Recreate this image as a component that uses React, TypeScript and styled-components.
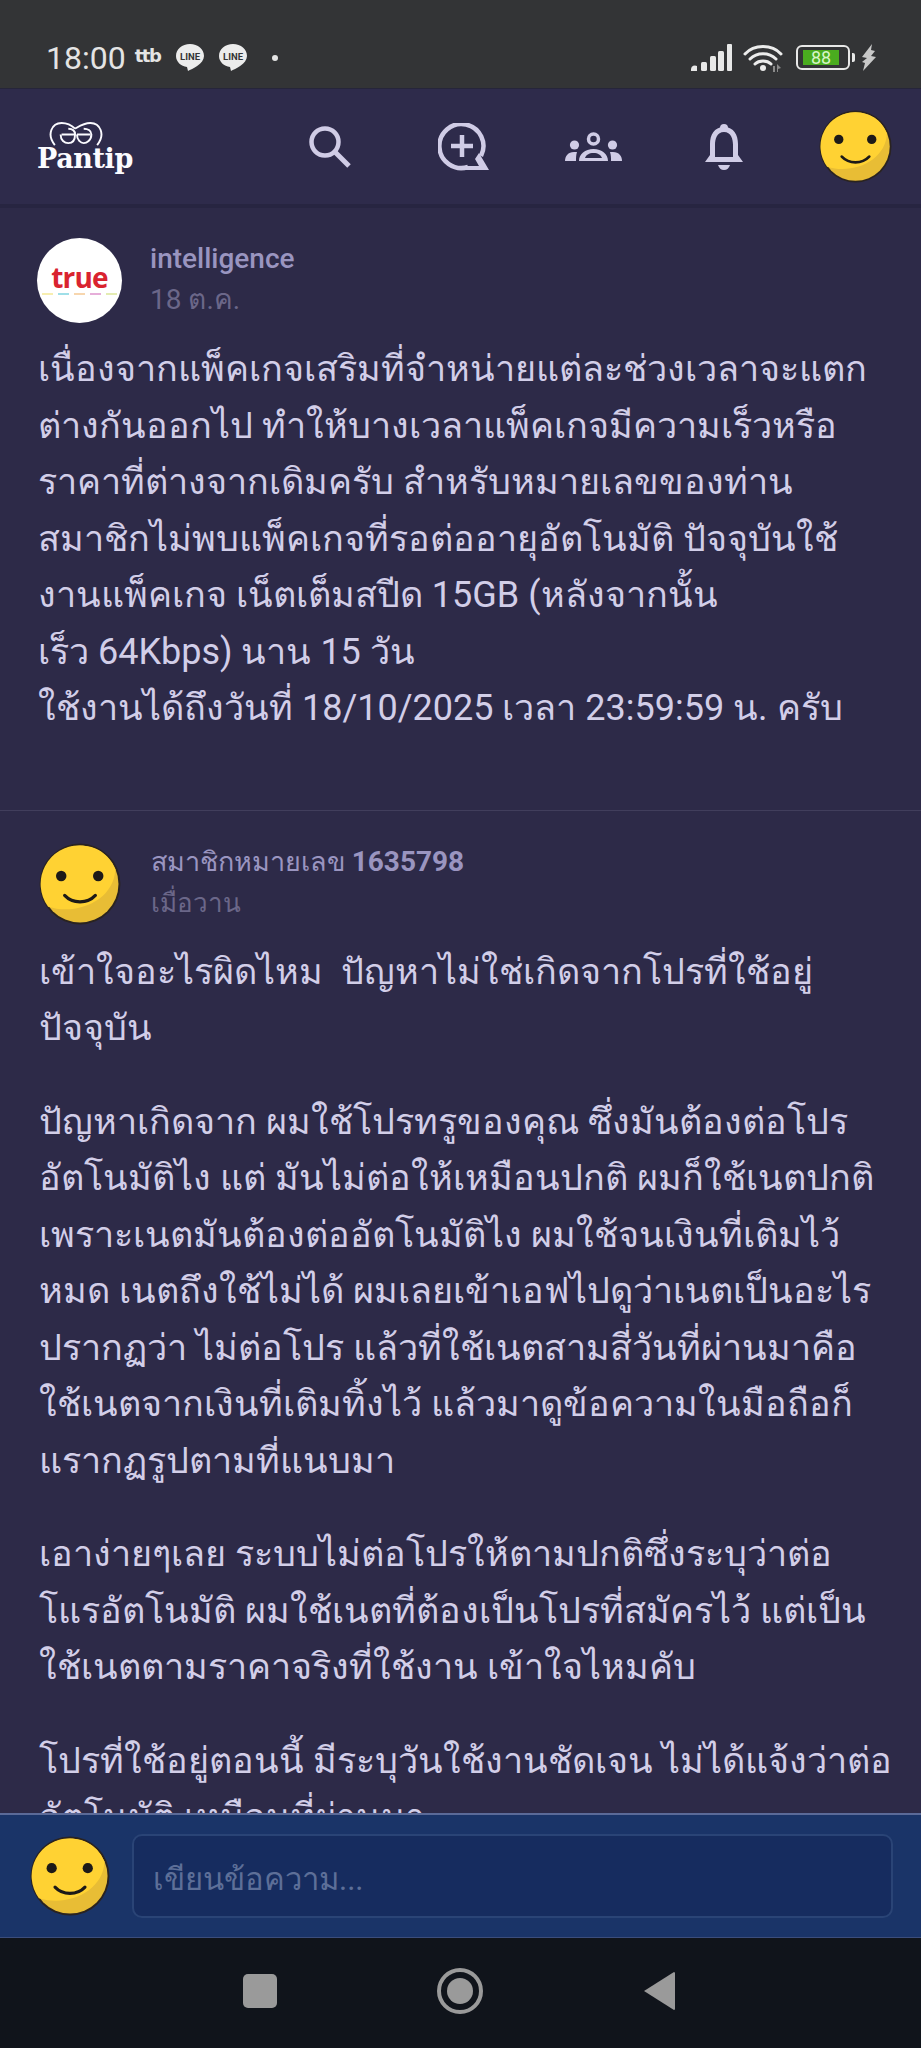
import styled, { createGlobalStyle } from 'styled-components';

const GlobalStyle = createGlobalStyle`
  html, body {
    margin: 0;
    padding: 0;
    background: #2d2a48;
  }
`;

const Screen = styled.div`
  width: 921px;
  height: 2048px;
  display: flex;
  flex-direction: column;
  overflow: hidden;
  font-family: Roboto, 'Noto Sans', sans-serif;
  background: #2d2a48;
`;

const StatusBar = styled.div`
  height: 88px;
  flex: none;
  box-sizing: border-box;
  display: flex;
  align-items: center;
  padding: 27px 44px 0 46px;
  background: #333436;
  color: #e4e4e4;
`;

const Clock = styled.span`
  font-size: 32px;
  line-height: 36px;
  margin-right: 9px;
`;

const CarrierMark = styled.span`
  font-family: 'DejaVu Sans', sans-serif;
  font-weight: 700;
  font-size: 18px;
  letter-spacing: -1.5px;
  line-height: 24px;
  margin-right: 15px;
  margin-top: -3px;
`;

const StatusIcons = styled.div`
  margin-left: auto;
  display: flex;
  align-items: center;
`;

const Icon = styled.svg<{ $after?: number; $before?: number }>`
  display: block;
  flex: none;
  margin-right: ${({ $after = 0 }) => $after}px;
  margin-left: ${({ $before = 0 }) => $before}px;
`;

const BatteryBox = styled.div`
  width: 54px;
  height: 25px;
  box-sizing: border-box;
  border: 2px solid #e8e8e8;
  border-radius: 6px;
  padding: 3px 9px 3px 5px;
  margin: 0 2px 0 13px;
`;

const BatteryFill = styled.div`
  height: 100%;
  background: #4aac1f;
  color: #d8f5c8;
  font-size: 18px;
  line-height: 15px;
  text-align: center;
`;

const BatteryCap = styled.div`
  width: 3px;
  height: 9px;
  background: #e8e8e8;
  border-radius: 0 2px 2px 0;
  margin-right: 6px;
`;

const Header = styled.header`
  height: 116px;
  flex: none;
  box-sizing: border-box;
  display: flex;
  align-items: center;
  padding: 0 29px 0 37px;
  background: #2e2b4b;
  border-top: 1px solid #26253a;
`;

const Logo = styled.div`
  width: 96px;
  display: flex;
  flex-direction: column;
  align-items: center;
  margin-right: 176px;
`;

const LogoWord = styled.span`
  font-family: 'DejaVu Serif', serif;
  font-weight: 700;
  font-size: 27px;
  line-height: 26px;
  letter-spacing: -0.4px;
  color: #fbfbff;
`;

const HeaderIcons = styled.nav`
  flex: 1;
  display: flex;
  align-items: center;
`;

const HeaderShadow = styled.div`
  height: 4px;
  flex: none;
  background: #272541;
`;

const Feed = styled.main`
  flex: 1;
  min-height: 0;
  overflow: hidden;
`;

const Post = styled.article<{ $divided?: boolean }>`
  box-sizing: border-box;
  padding: ${({ $divided }) => ($divided ? '30px 30px 0 39px' : '30px 30px 36px 37px')};
  border-top: ${({ $divided }) => ($divided ? '1px solid #413e5c' : 'none')};
`;

const Author = styled.div<{ $gap: number }>`
  display: flex;
  align-items: center;
  column-gap: ${({ $gap }) => $gap}px;
`;

const TrueBadge = styled.div`
  width: 85px;
  height: 85px;
  border-radius: 50%;
  background: #fff;
  display: flex;
  flex-direction: column;
  align-items: center;
  justify-content: center;
`;

const TrueWord = styled.span`
  font-family: 'Open Sans', sans-serif;
  font-weight: 700;
  font-size: 28px;
  line-height: 26px;
  letter-spacing: -0.8px;
  color: #d9232f;
  margin-top: -2px;
`;

const TrueStripes = styled.div`
  display: flex;
  gap: 5px;
  margin-top: 3px;
`;

const Stripe = styled.span<{ $color: string }>`
  width: 11px;
  height: 2px;
  background: ${({ $color }) => $color};
`;

const AuthorText = styled.div`
  display: flex;
  flex-direction: column;
  padding-bottom: 3px;
`;

const Name = styled.div<{ $size?: number }>`
  font-size: ${({ $size = 28 }) => $size}px;
  line-height: 41px;
  font-weight: 500;
  color: #9a95c0;
`;

const Digits = styled.span`
  font-size: 28px;
  font-weight: 700;
`;

const When = styled.div<{ $size?: number }>`
  font-size: ${({ $size = 28 }) => $size}px;
  line-height: 41px;
  color: #6b6789;
`;

const Body = styled.div<{ $indent: number; $top: number }>`
  margin: ${({ $top }) => $top}px 0 0 ${({ $indent }) => $indent}px;
`;

const Para = styled.p`
  margin: 0 0 37px;
  font-size: 36px;
  line-height: 56.5px;
  color: #d2cee8;
  white-space: nowrap;
`;

const Composer = styled.div`
  height: 125px;
  flex: none;
  box-sizing: border-box;
  display: flex;
  align-items: center;
  column-gap: 22px;
  padding: 0 28px 0 30px;
  background: #1a3468;
  border-top: 2px solid #5b6a98;
  border-bottom: 1px solid #3b4d7c;
`;

const Input = styled.div`
  flex: 1;
  height: 84px;
  box-sizing: border-box;
  display: flex;
  align-items: center;
  padding: 5px 19px 0;
  background: #162c5f;
  border: 2px solid #2a4476;
  border-radius: 10px;
  font-size: 31px;
  color: #5d6f98;
`;

const NavBar = styled.div`
  height: 110px;
  flex: none;
  display: flex;
  align-items: center;
  justify-content: center;
  column-gap: 160px;
  background: #10141b;
  padding: 0 4px 4px 0;
  box-sizing: border-box;
`;

const Smiley = ({ size }: { size: number }) => (
  <Icon width={size} height={size} viewBox="0 0 72 72">
    <circle cx="36" cy="36" r="35.500" fill="#2a2320" />
    <circle cx="36" cy="36" r="33.800" fill="#e8bd35" />
    <path d="M36 2.2A33.800 33.800 0 0 0 8 56c26 8 58-6 59-33C62 10 50 2.200 36 2.200Z" fill="#ffd233" />
    <circle cx="19.500" cy="29" r="4.600" fill="#1d1a18" />
    <circle cx="52" cy="29" r="4.600" fill="#1d1a18" />
    <path d="M22.500 46c7 7.500 20 7.500 27 0" fill="none" stroke="#1d1a18" strokeWidth="2.800" strokeLinecap="round" />
  </Icon>
);

const LineBubble = () => (
  <Icon width="30" height="29" viewBox="0 0 30 29" $after={13}>
    <path d="M15 1C7 1 1 6 1 13c0 6 5 10 11 11l1 4c4-2 16-7 16-15C29 6 23 1 15 1Z" fill="#ececec" />
    <text x="15" y="17" fontFamily="Roboto" fontWeight="700" fontSize="9.500" textAnchor="middle" fill="#333436">
      LINE
    </text>
  </Icon>
);

const TRUE_STRIPES = ['#f7eeb0', '#9fdfe8', '#f7d6ae', '#e6aed9', '#e4ecb2'];

const App = () => (
  <>
    <GlobalStyle />
    <Screen>
      <StatusBar>
        <Clock>18:00</Clock>
        <CarrierMark>ttb</CarrierMark>
        <LineBubble />
        <LineBubble />
        <Icon width="8" height="8" viewBox="0 0 8 8" $before={10}>
          <circle cx="4" cy="4" r="3" fill="#e4e4e4" />
        </Icon>
        <StatusIcons>
          <Icon width="41" height="27" viewBox="0 0 41 27" $after={11}>
            <path d="M0 27v-2a4 4 0 0 1 6-3v5Z" fill="#e8e8e8" />
            <rect x="10" y="18" width="6" height="9" rx="1.500" fill="#e8e8e8" />
            <rect x="19" y="12" width="6" height="15" rx="1.500" fill="#e8e8e8" />
            <rect x="27" y="7" width="6" height="20" rx="1.500" fill="#e8e8e8" />
            <rect x="36" y="0" width="5" height="27" rx="1" fill="#e8e8e8" />
          </Icon>
          <Icon width="40" height="30" viewBox="0 0 40 30">
            <g fill="none" stroke="#ececec" strokeWidth="3" strokeLinecap="round">
              <path d="M2 11C11 1 29 1 38 11" />
              <path d="M7 16C14 9 26 9 33 16" />
              <path d="M12 21c4-4 12-4 16 0" />
            </g>
            <circle cx="20" cy="25" r="3" fill="#ececec" />
            <path d="M30 29v-6h2v6Zm4 0v-8l4 4-3 1v3Z" fill="#8a8a8a" />
          </Icon>
          <BatteryBox>
            <BatteryFill>88</BatteryFill>
          </BatteryBox>
          <BatteryCap />
          <Icon width="16" height="27" viewBox="0 0 16 27">
            <path d="M11 0 1 13l5 1-5 4 3 1-2 8 13-14-5-1 4-5-4-1Z" fill="#c8c8c8" />
          </Icon>
        </StatusIcons>
      </StatusBar>

      <Header>
        <Logo>
          <Icon width="56" height="25" viewBox="0 0 58 26" $after={18}>
            <g fill="none" stroke="#fbfbff" strokeWidth="2">
              <path d="M7 25C-2 14 4 2 14 2c7 0 11 3 14 6" />
              <path d="M51 25C60 14 54 2 44 2c-7 0-11 3-16 6" />
              <path d="M14 14h14M30 14h14" />
              <path d="M13 14c0 6 4 9 8 9s7-3 7-9c0-4-3-6-7-6" />
              <path d="M30 14c0 6 4 9 7 9s8-3 8-9c0-4-4-6-8-6" />
            </g>
          </Icon>
          <LogoWord>Pantip</LogoWord>
        </Logo>
        <HeaderIcons>
          <Icon width="42" height="42" viewBox="0 0 42 42" $after={87}>
            <circle cx="16" cy="16" r="13.500" fill="none" stroke="#d0cce6" strokeWidth="4.500" />
            <path d="M26 26l14 14" stroke="#d0cce6" strokeWidth="5" />
          </Icon>
          <Icon width="52" height="48" viewBox="0 0 52 48" $after={75}>
            <path d="M30 44A22 22 0 1 1 43 33" fill="none" stroke="#d0cce6" strokeWidth="4.500" />
            <path d="M24 12v22M13 23h22" fill="none" stroke="#d0cce6" strokeWidth="4.500" />
            <path d="M41 30l10 17H26v-4h15l-4-7Z" fill="#d0cce6" />
          </Icon>
          <Icon width="57" height="30" viewBox="0 0 57 30" $after={83}>
            <g fill="#d0cce6">
              <circle cx="9.500" cy="13" r="4.600" />
              <circle cx="47.500" cy="13" r="4.600" />
              <path d="M0 29c0-5 3-9 9-9h3c-1 3-1 6-1 9ZM57 29c0-5-3-9-9-9h-3c1 3 1 6 1 9Z" />
              <path d="M14 29c0-7 6-12 14.500-12S43 22 43 29ZM20 26h17c-1-3-4-5-8.500-5S21 23 20 26Z" fillRule="evenodd" />
            </g>
            <circle cx="28.500" cy="7" r="5" fill="none" stroke="#d0cce6" strokeWidth="3.500" />
          </Icon>
          <Icon width="38" height="46" viewBox="0 0 38 46" $after={76}>
            <g fill="#d0cce6">
              <circle cx="19" cy="4" r="4" />
              <path d="M19 3C9 3 5 11 5 20v11l-5 7h38l-5-7V20c0-9-4-17-14-17Zm0 5c7 0 9 7 9 13v12H10V21c0-6 2-13 9-13Z" fillRule="evenodd" />
              <path d="M13 41h12c-1 3-3 5-6 5s-5-2-6-5Z" />
            </g>
          </Icon>
          <Smiley size={73} />
        </HeaderIcons>
      </Header>
      <HeaderShadow />

      <Feed>
        <Post>
          <Author $gap={28}>
            <TrueBadge>
              <TrueWord>true</TrueWord>
              <TrueStripes>
                {TRUE_STRIPES.map((color) => (
                  <Stripe key={color} $color={color} />
                ))}
              </TrueStripes>
            </TrueBadge>
            <AuthorText>
              <Name>intelligence</Name>
              <When>18 ต.ค.</When>
            </AuthorText>
          </Author>
          <Body $indent={1} $top={18}>
            <Para>
              เนื่องจากแพ็คเกจเสริมที่จำหน่ายแต่ละช่วงเวลาจะแตก
              <br />
              ต่างกันออกไป ทำให้บางเวลาแพ็คเกจมีความเร็วหรือ
              <br />
              ราคาที่ต่างจากเดิมครับ สำหรับหมายเลขของท่าน
              <br />
              สมาชิกไม่พบแพ็คเกจที่รอต่ออายุอัตโนมัติ ปัจจุบันใช้
              <br />
              งานแพ็คเกจ เน็ตเต็มสปีด 15GB (หลังจากนั้น
              <br />
              เร็ว 64Kbps) นาน 15 วัน
              <br />
              ใช้งานได้ถึงวันที่ 18/10/2025 เวลา 23:59:59 น. ครับ
            </Para>
          </Body>
        </Post>
        <Post $divided>
          <Author $gap={30}>
            <Smiley size={82} />
            <AuthorText>
              <Name $size={27}>
                สมาชิกหมายเลข <Digits>1635798</Digits>
              </Name>
              <When $size={26}>เมื่อวาน</When>
            </AuthorText>
          </Author>
          <Body $indent={0} $top={17}>
            <Para>
              เข้าใจอะไรผิดไหม&nbsp; ปัญหาไม่ใช่เกิดจากโปรที่ใช้อยู่
              <br />
              ปัจจุบัน
            </Para>
            <Para>
              ปัญหาเกิดจาก ผมใช้โปรทรูของคุณ ซึ่งมันต้องต่อโปร
              <br />
              อัตโนมัติไง แต่ มันไม่ต่อให้เหมือนปกติ ผมก็ใช้เนตปกติ
              <br />
              เพราะเนตมันต้องต่ออัตโนมัติไง ผมใช้จนเงินที่เติมไว้
              <br />
              หมด เนตถึงใช้ไม่ได้ ผมเลยเข้าเอฟไปดูว่าเนตเป็นอะไร
              <br />
              ปรากฏว่า ไม่ต่อโปร แล้วที่ใช้เนตสามสี่วันที่ผ่านมาคือ
              <br />
              ใช้เนตจากเงินที่เติมทิ้งไว้ แล้วมาดูข้อความในมือถือก็
              <br />
              แรากฏรูปตามที่แนบมา
            </Para>
            <Para>
              เอาง่ายๆเลย ระบบไม่ต่อโปรให้ตามปกติซึ่งระบุว่าต่อ
              <br />
              โแรอัตโนมัติ ผมใช้เนตที่ต้องเป็นโปรที่สมัครไว้ แต่เป็น
              <br />
              ใช้เนตตามราคาจริงที่ใช้งาน เข้าใจไหมคับ
            </Para>
            <Para>
              โปรที่ใช้อยู่ตอนนี้ มีระบุวันใช้งานชัดเจน ไม่ได้แจ้งว่าต่อ
              <br />
              อัตโนมัติ เหมือนที่ผ่านมา
            </Para>
          </Body>
        </Post>
      </Feed>

      <Composer>
        <Smiley size={80} />
        <Input>เขียนข้อความ...</Input>
      </Composer>

      <NavBar>
        <Icon width="34" height="34" viewBox="0 0 34 34">
          <rect width="34" height="34" rx="5" fill="#9a9a9a" />
        </Icon>
        <Icon width="46" height="46" viewBox="0 0 46 46">
          <circle cx="23" cy="23" r="21" fill="none" stroke="#9a9a9a" strokeWidth="4" />
          <circle cx="23" cy="23" r="13" fill="#9a9a9a" />
        </Icon>
        <Icon width="32" height="40" viewBox="0 0 32 40">
          <path d="M31 1 1 20l30 19c1 0 1-1 1-2V3c0-1 0-2-1-2Z" fill="#9a9a9a" />
        </Icon>
      </NavBar>
    </Screen>
  </>
);

export default App;
